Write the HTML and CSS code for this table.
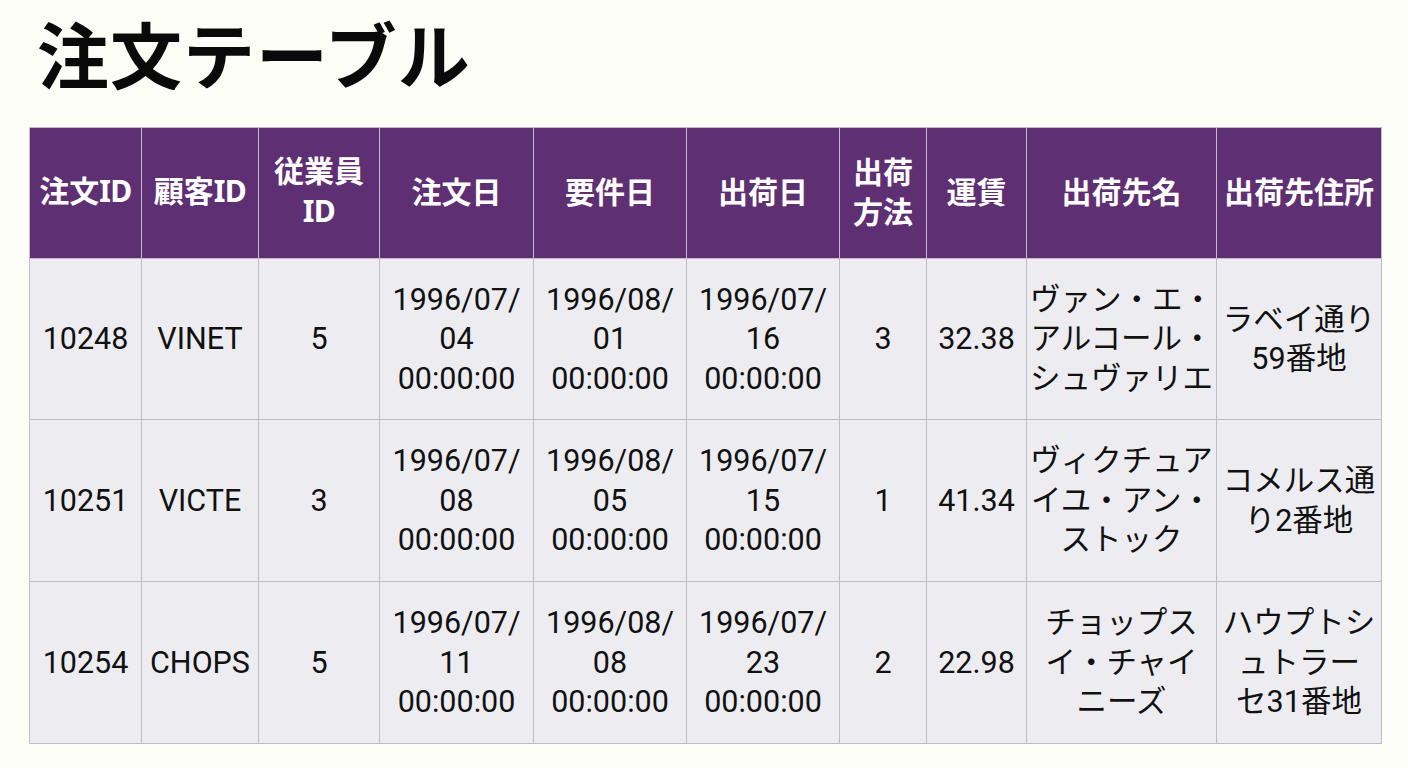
FILE: index.html
```html
<!DOCTYPE html>
<html lang="ja">
<head>
<meta charset="utf-8">
<title>注文テーブル</title>
<link rel="stylesheet" href="styles.css">
</head>
<body>
<main class="page">
  <h1 class="title">注文テーブル</h1>
  <table class="orders">
    <colgroup>
      <col class="c-id"><col class="c-cust"><col class="c-emp"><col class="c-date"><col class="c-date2"><col class="c-date2"><col class="c-ship"><col class="c-freight"><col class="c-name"><col class="c-addr">
    </colgroup>
    <thead>
      <tr>
        <th>注文<span class="lat">ID</span></th>
        <th>顧客<span class="lat">ID</span></th>
        <th>従業員<br><span class="lat">ID</span></th>
        <th>注文日</th>
        <th>要件日</th>
        <th>出荷日</th>
        <th>出荷<br>方法</th>
        <th>運賃</th>
        <th>出荷先名</th>
        <th>出荷先住所</th>
      </tr>
    </thead>
    <tbody>
      <tr class="r1">
        <td>10248</td>
        <td>VINET</td>
        <td>5</td>
        <td>1996/07/<br>04<br>00:00:00</td>
        <td>1996/08/<br>01<br>00:00:00</td>
        <td>1996/07/<br>16<br>00:00:00</td>
        <td>3</td>
        <td>32.38</td>
        <td>ヴァン・エ・<br>アルコール・<br>シュヴァリエ</td>
        <td>ラベイ通り<br>59番地</td>
      </tr>
      <tr class="r2">
        <td>10251</td>
        <td>VICTE</td>
        <td>3</td>
        <td>1996/07/<br>08<br>00:00:00</td>
        <td>1996/08/<br>05<br>00:00:00</td>
        <td>1996/07/<br>15<br>00:00:00</td>
        <td>1</td>
        <td>41.34</td>
        <td>ヴィクチュア<br>イユ・アン・<br>ストック</td>
        <td>コメルス通<br>り2番地</td>
      </tr>
      <tr class="r3">
        <td>10254</td>
        <td>CHOPS</td>
        <td>5</td>
        <td>1996/07/<br>11<br>00:00:00</td>
        <td>1996/08/<br>08<br>00:00:00</td>
        <td>1996/07/<br>23<br>00:00:00</td>
        <td>2</td>
        <td>22.98</td>
        <td>チョップス<br>イ・チャイ<br>ニーズ</td>
        <td>ハウプトシ<br>ュトラー<br>セ31番地</td>
      </tr>
    </tbody>
  </table>
</main>
</body>
</html>
```

FILE: styles.css
```css
html, body {
  margin: 0;
  padding: 0;
  background: #fdfdf8;
}

.page {
  padding: 16px 0 0 29px;
}

.title {
  margin: 0 0 39px 8px;
  font-family: "Noto Sans CJK JP", sans-serif;
  font-weight: 700;
  font-size: 72px;
  line-height: 72px;
  color: #0a0a0a;
  letter-spacing: 1px;
}

.orders {
  border-collapse: collapse;
  table-layout: fixed;
  width: 1353px;
}

.c-id { width: 112px; }
.c-cust { width: 117px; }
.c-emp { width: 121px; }
.c-date { width: 154px; }
.c-date2 { width: 153px; }
.c-ship { width: 87px; }
.c-freight { width: 100px; }
.c-name { width: 190px; }
.c-addr { width: 165px; }

.orders th,
.orders td {
  padding: 0 2px;
  text-align: center;
  vertical-align: middle;
  white-space: nowrap;
}

.orders th {
  height: 124px;
  padding-bottom: 6px;
  background: #5f2f73;
  color: #ffffff;
  border: 1px solid #c7b8cc;
  font-family: "Noto Sans CJK JP", sans-serif;
  font-weight: 700;
  font-size: 30px;
  line-height: 40px;
}

.orders th .lat {
  font-family: "Noto Sans", sans-serif;
  letter-spacing: -0.5px;
}

.orders td {
  background: #ededf1;
  color: #111111;
  border: 1px solid #bdbdc4;
  font-family: Roboto, "Noto Sans CJK JP", sans-serif;
  font-size: 30.5px;
  line-height: 39.5px;
}

.orders .r1 td { height: 160px; }
.orders .r2 td { height: 161px; }
.orders .r3 td { height: 161px; }
```
